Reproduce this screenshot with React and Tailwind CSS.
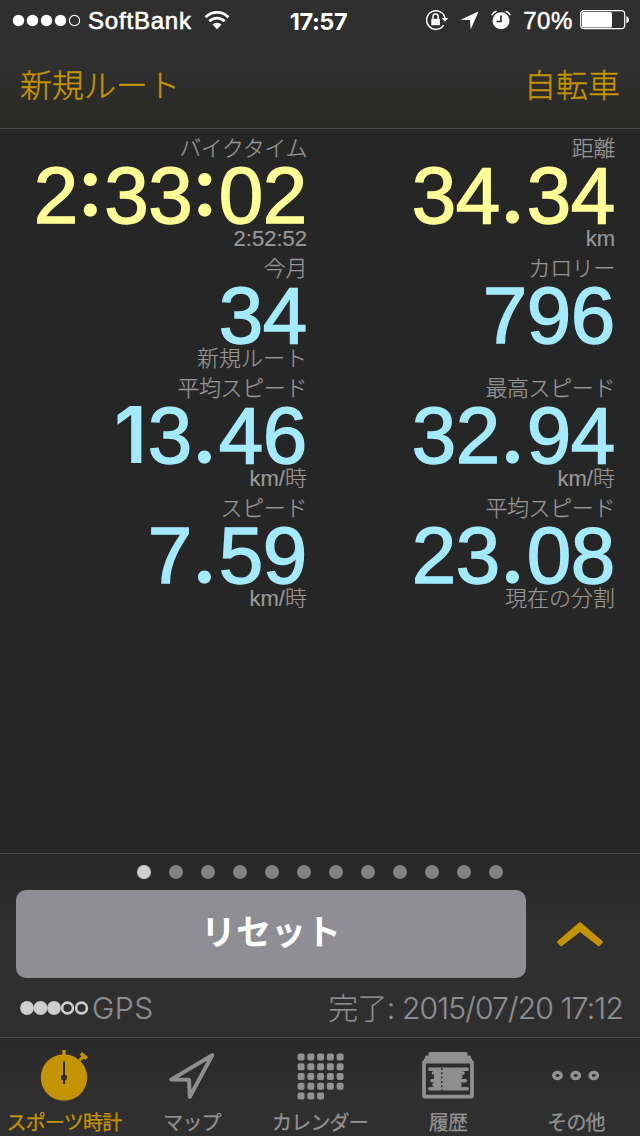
import clsx from "clsx";

const metrics = [
  { label: "バイクタイム", value: "2:33:02", note: "2:52:52", color: "text-[#ffff96]" },
  { label: "距離", value: "34.34", note: "km", color: "text-[#ffff96]" },
  { label: "今月", value: "34", note: "新規ルート", color: "text-[#a3eaff]" },
  { label: "カロリー", value: "796", note: "", color: "text-[#a3eaff]" },
  { label: "平均スピード", value: "13.46", note: "km/時", color: "text-[#a3eaff]" },
  { label: "最高スピード", value: "32.94", note: "km/時", color: "text-[#a3eaff]" },
  { label: "スピード", value: "7.59", note: "km/時", color: "text-[#a3eaff]" },
  { label: "平均スピード", value: "23.08", note: "現在の分割", color: "text-[#a3eaff]" },
];

// "1" has no foot and the separators are round, so they come from other fonts
const charClass = (char) => {
  if (char === "1") return "w-[44px] pl-[9px] leading-[0px] font-['Inter',sans-serif] font-semibold text-[78px]";
  if (char === ".") return "w-[27px] pr-[2px] leading-[0px] font-['Lato',sans-serif] font-bold text-[86px]";
  if (char === ":") return "relative -top-[7px] w-[26.5px] pr-[2px] leading-[0px] font-['Lato',sans-serif] font-bold text-[86px]";
  return "w-[44px] [-webkit-text-stroke:1.4px_currentColor]";
};

function BigValue({ value, color }) {
  return (
    <div className={clsx("flex h-[60px] items-baseline justify-end font-['Liberation_Sans',sans-serif] text-[80px] leading-[64px]", color)}>
      {value.split("").map((char, i) => (
        <span key={i} className={clsx("flex shrink-0 justify-center", charClass(char))}>{char}</span>
      ))}
    </div>
  );
}

function Metric({ label, value, note, color }) {
  return (
    <div className="h-[120px] text-right text-[22px] font-light text-[#979797]">
      <div className="h-[30px] leading-[30px] tracking-[-0.4px] [-webkit-text-stroke:0.25px_currentColor]">{label}</div>
      <BigValue value={value} color={color} />
      <div className="h-[30px] leading-[30px] [-webkit-text-stroke:0.2px_currentColor]">{note}</div>
    </div>
  );
}

function StatusBar() {
  return (
    <div className="grid h-10 grid-cols-[230px_177px_233px] items-center font-['Inter',sans-serif] text-white">
      <div className="flex items-center pl-[12px]">
        <svg className="shrink-0" width="70" height="14" viewBox="0 0 70 14" fill="#fff">
          <circle cx="6.5" cy="7.5" r="5.7" />
          <circle cx="20.5" cy="7.5" r="5.7" />
          <circle cx="34.5" cy="7.5" r="5.7" />
          <circle cx="48.5" cy="7.5" r="5.7" />
          <circle cx="62.5" cy="7.5" r="5.1" fill="none" stroke="#fff" strokeWidth="1.1" />
        </svg>
        <span className="ml-[6px] pt-[2px] font-['Liberation_Sans',sans-serif] text-[24px] leading-9 tracking-[0.8px] [-webkit-text-stroke:0.6px_currentColor]">SoftBank</span>
        <svg className="ml-[12px] shrink-0" width="26" height="20" viewBox="0 0 26 20" fill="none" stroke="#fff" strokeWidth="2.7">
          <path d="M1.6 7.2a16 16 0 0 1 22.8 0" />
          <path d="M5.3 11.3a10.8 10.8 0 0 1 15.4 0" />
          <path d="M13 19.2l-4.5-4.6a6.4 6.4 0 0 1 9 0z" fill="#fff" stroke="none" />
        </svg>
      </div>
      <div className="pt-[3px] text-center text-[23.5px] font-bold leading-9 tracking-[-0.4px]">17:57</div>
      <div className="flex items-center justify-end pr-[10px]">
        <svg className="shrink-0" width="24" height="22" viewBox="0 0 24 22" fill="none" stroke="#fff" strokeWidth="1.5">
          <path d="M18.7 16.2A9.3 9.3 0 1 1 20 9" />
          <path d="M16.8 9h6.4L20 12.8z" fill="#fff" stroke="none" />
          <rect x="6.3" y="9.8" width="8.6" height="6.4" fill="#fff" stroke="none" />
          <path d="M8 10V7.6a2.6 2.6 0 0 1 5.2 0V10" />
        </svg>
        <svg className="ml-[11px] shrink-0" width="19" height="19" viewBox="0 0 19 19" fill="#fff">
          <path d="M18.5 .5L.5 8.8l9.4.3.8 9.4z" />
        </svg>
        <svg className="ml-[12px] shrink-0" width="20" height="20" viewBox="0 0 20 20" fill="none" stroke="#fff" strokeWidth="1.6">
          <circle cx="10" cy="10.7" r="8.5" fill="#fff" stroke="none" />
          <path d="M.8 5.2A7 7 0 0 1 5.5 1.2M14.5 1.2a7 7 0 0 1 4.7 4" />
          <path d="M10 5.5v6H5.6" stroke="#2d2d2d" strokeWidth="1.7" />
        </svg>
        <span className="ml-[12px] pt-[2px] font-['Liberation_Sans',sans-serif] text-[24px] leading-9 tracking-[0.6px] [-webkit-text-stroke:0.5px_currentColor]">70%</span>
        <svg className="ml-[7px] shrink-0" width="50" height="20" viewBox="0 0 50 20">
          <rect x=".7" y=".7" width="44" height="18" rx="3.5" fill="none" stroke="#fff" strokeWidth="1.2" />
          <rect x="2" y="2" width="30" height="15.4" rx="1.5" fill="#fff" />
          <path d="M46.3 6.2c3.6.6 3.6 6.4 0 7z" fill="#fff" />
        </svg>
      </div>
    </div>
  );
}

function StopwatchIcon() {
  return (
    <svg width="48" height="52" viewBox="0 0 48 52" fill="#c39400">
      <circle cx="24" cy="27.5" r="23.2" />
      <path d="M22.3 0h3.4v6h-3.4z" />
      <path d="M38.6 9.2l2.9-2.9-1.9-1.8 2.6-2.6 5.8 5.4-2.6 2.6-1.7-1.5-2.9 2.9z" />
      <path d="M24 11.5V34" stroke="#29292a" strokeWidth="2" />
      <circle cx="24" cy="27.5" r="3" fill="#2b2b2b" />
    </svg>
  );
}

function ArrowIcon() {
  return (
    <svg width="48" height="52" viewBox="0 0 48 52" fill="none" stroke="#8f8f8f" strokeWidth="4" strokeLinejoin="round">
      <path d="M44.2 5.2L3.2 29.6l17.8.2.8 17z" />
    </svg>
  );
}

function CalendarIcon() {
  const cells = Array.from({ length: 23 });
  return (
    <svg width="48" height="52" viewBox="0 0 48 52" fill="#929292">
      {cells.map((_, i) => (
        <rect key={i} x={1.6 + (i % 5) * 9.75} y={3.6 + Math.floor(i / 5) * 9.7} width="7" height="7" rx="2" />
      ))}
    </svg>
  );
}

function HistoryIcon() {
  return (
    <svg width="54" height="52" viewBox="0 0 54 52" fill="#8f8f8f">
      <path d="M9 2h36q1.5 0 1.5 1.5V5.5h2q1.5 0 1.5 1.5V9.5H4V7q0-1.5 1.500-1.500h2V3.500Q7.500 2 9 2z" />
      <rect x="3" y="11.6" width="48" height="35" rx="1" fill="none" stroke="#8f8f8f" strokeWidth="3.8" />
      <path d="M3 8.5h48v3H3z" />
      {/* stack of log sheets with ragged edges */}
      <g stroke="#8f8f8f" strokeWidth="3.6" strokeLinecap="round">
        <path d="M8.800 19.200h37.400M12.500 23h29.500M15 26.800h25M11 30.800h33.500M13 34.800h26M8.800 38.800h37.400" />
      </g>
      <path d="M13 19h27v20H13z" />
      <path d="M20.8 18v23" stroke="#303030" strokeWidth="1.5" strokeDasharray="2 2.3" />
    </svg>
  );
}

function MoreIcon() {
  return (
    <svg width="50" height="52" viewBox="0 0 50 52" fill="none" stroke="#929292" strokeWidth="3.4">
      <ellipse cx="6.5" cy="25.500" rx="3.7" ry="3.1" />
      <ellipse cx="24.7" cy="25.500" rx="3.7" ry="3.1" />
      <ellipse cx="42.8" cy="25.500" rx="3.7" ry="3.1" />
    </svg>
  );
}

const tabs = [
  { label: "スポーツ時計", Icon: StopwatchIcon, active: true },
  { label: "マップ", Icon: ArrowIcon },
  { label: "カレンダー", Icon: CalendarIcon },
  { label: "履歴", Icon: HistoryIcon },
  { label: "その他", Icon: MoreIcon },
];

export default function App() {
  return (
    <div className="flex h-[1136px] w-[640px] flex-col overflow-hidden bg-[#262626] font-['Liberation_Sans','Noto_Sans_CJK_JP',sans-serif]">
      <header className="h-[129px] border-b border-[#4a494c] bg-linear-to-b from-[#2f2f2f] from-50% to-[#292927]">
        <StatusBar />
        <div className="flex items-center justify-between px-5 pt-[22px] text-[32px] font-light leading-[48px] text-[#c39400] [-webkit-text-stroke:0.4px_currentColor]">
          <button>新規ルート</button>
          <button>自転車</button>
        </div>
      </header>

      <main className="grid grow grid-cols-[307px_308px] content-start pt-[5px]">
        {metrics.map((metric, i) => (
          <Metric key={i} {...metric} />
        ))}
      </main>

      <section className="h-[184px] border-t border-[#4a4a4a] bg-linear-to-b from-[#272727] to-[#2f2f2f] to-40%">
        <div className="flex justify-center gap-[18px] pt-[11px]">
          {Array.from({ length: 12 }).map((_, i) => (
            <span key={i} className={clsx("size-[14px] rounded-full", i === 0 ? "bg-[#cfcfcf]" : "bg-[#828282]")} />
          ))}
        </div>
        <div className="mt-[11px] flex items-center pl-4">
          <button className="h-[88px] w-[510px] rounded-[10px] bg-[#8f8e94] pb-[1px] text-[35px] font-bold text-white">リセット</button>
          <svg className="ml-[30px] shrink-0" width="48" height="28" viewBox="0 0 48 28" fill="#c39400">
            <path d="M1.600 21L22.800 2.800q1.200-1 2.400 0L46.400 21q1 .900.100 1.900l-2.600 2.900q-.9 1-1.900.200L24 12 6 26q-1 .8-1.900-.2l-2.600-2.900q-.9-1 .1-1.900z" />
          </svg>
        </div>
        <div className="flex h-[60px] items-center justify-between pl-5 pr-[17px] text-[30px] font-light leading-[62px] text-[#8e8e93] [-webkit-text-stroke:0.2px_currentColor]">
          <div className="flex items-center">
            <svg width="70" height="16" viewBox="0 0 70 16" fill="#cecece">
              <circle cx="7" cy="8" r="6.9" />
              <circle cx="20.5" cy="8" r="6.9" />
              <circle cx="34" cy="8" r="6.9" />
              <g fill="none" stroke="#cecece" strokeWidth="2.6">
                <circle cx="47.5" cy="8" r="5.4" />
                <circle cx="61.5" cy="8" r="5.4" />
              </g>
            </svg>
            <span className="ml-[2px] font-['Inter',sans-serif] tracking-[0.5px]">GPS</span>
          </div>
          <div className="font-['Inter','Noto_Sans_CJK_JP',sans-serif] tracking-[-0.8px]">完了: 2015/07/20 17:12</div>
        </div>
      </section>

      <nav className="grid h-[99px] grid-cols-5 border-t border-[#4a4a4a] bg-linear-to-b from-[#292929] to-[#2f2f2f] to-60%">
        {tabs.map(({ label, Icon, active }) => (
          <button key={label} className={clsx("flex flex-col items-center pt-[12px] text-[20px] [-webkit-text-stroke:0.25px_currentColor]", active ? "text-[#c39400]" : "text-[#929292]")}>
            <Icon />
            <span className="mt-[6px] whitespace-nowrap leading-[30px] tracking-[-0.8px]">{label}</span>
          </button>
        ))}
      </nav>
    </div>
  );
}
